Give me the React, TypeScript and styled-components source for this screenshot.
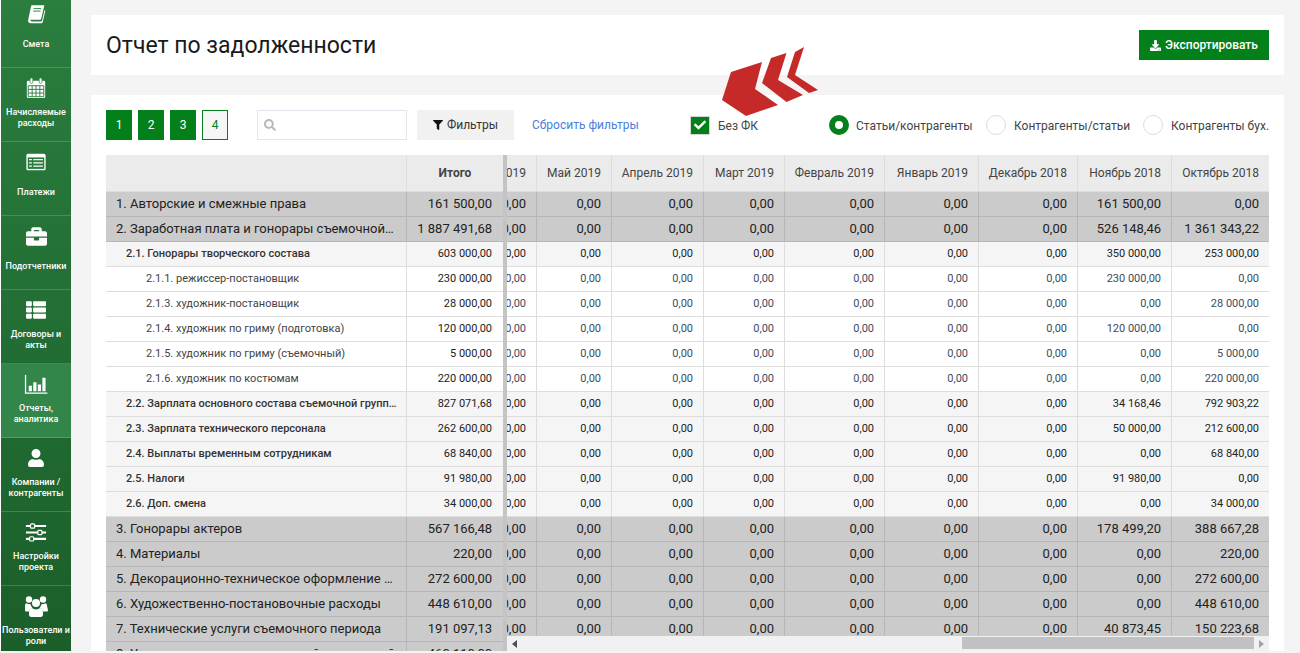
import React from "react";
import styled, { createGlobalStyle } from "styled-components";
import { FaBriefcase, FaCheck, FaDownload, FaFilter, FaSearch, FaThList, FaUser } from "react-icons/fa";

const GREEN = "#04801b";

const GlobalStyle = createGlobalStyle`
  html, body {
    margin: 0;
    padding: 0;
    height: 100%;
    overflow: hidden;
    background: #f4f4f4;
    font-family: Roboto, "Liberation Sans", sans-serif;
    color: #333;
  }
  * { box-sizing: border-box; }
`;

const BookIcon = () => (
  <svg width="20" height="20" viewBox="0 0 24 24">
    <path d="M7.5 1.5h14.5l-3.6 15.6c-.3 1.2-1 1.9-2.2 1.9H6.4c-.9 0-1.2 .6-.9 1.2.3 .6 .9 .9 1.7 .9h10.4c.8 0 1.5-.5 1.7-1.3l3-12.6.9 .8-3 13.2c-.3 1.1-1.3 1.9-2.5 1.9H5.6c-2 0-3.5-1.8-3-3.8L6 3c.2-.9 .8-1.5 1.5-1.5z" fill="#fff" />
    <path d="M9.2 5.5h9M8.5 8.5h9" stroke="#287c3c" strokeWidth="1.1" />
  </svg>
);

const CalendarIcon = () => (
  <svg width="22" height="22" viewBox="0 0 24 24">
    <rect x="2" y="4" width="20" height="19" rx="1.5" fill="#fff" />
    <path d="M3.5 9.5h17v12h-17zM3.5 13.5h17M3.5 17.5h17M7.8 9.5v12M12 9.5v12M16.2 9.5v12" stroke="#287c3c" strokeWidth="1" fill="none" />
    <rect x="5.5" y="1" width="3" height="6" rx="1.4" fill="#fff" stroke="#287c3c" strokeWidth=".7" />
    <rect x="15.5" y="1" width="3" height="6" rx="1.4" fill="#fff" stroke="#287c3c" strokeWidth=".7" />
  </svg>
);

const ListAltIcon = () => (
  <svg width="22" height="22" viewBox="0 0 24 24">
    <rect x="1.5" y="3" width="21" height="18" rx="2" fill="#fff" />
    <rect x="3" y="7" width="18" height="12.5" fill="#287c3c" />
    <path d="M4.5 9.5h3M9 9.5h10.5M4.5 13h3M9 13h10.5M4.5 16.5h3M9 16.5h10.5" stroke="#fff" strokeWidth="1.4" />
  </svg>
);

const ChartIcon = () => (
  <svg width="24" height="20" viewBox="0 0 26 22">
    <path d="M1.5 1v20h24" stroke="#fff" strokeWidth="1.4" fill="none" />
    <path d="M5 13h3.5v6H5zM10 9h3.5v10H10zM15 11.5h3.5V19H15zM20 4h3.5v15H20z" fill="#fff" />
  </svg>
);

const SlidersIcon = () => (
  <svg width="22" height="22" viewBox="0 0 24 24" fill="none">
    <path d="M1 5.5h22M1 12.5h22M1 19.5h22" stroke="#fff" strokeWidth="2.2" />
    <rect x="6" y="3.2" width="4.5" height="4.6" rx="1" fill="#1f6a30" stroke="#fff" strokeWidth="1.3" />
    <rect x="14" y="10.2" width="4.5" height="4.6" rx="1" fill="#1f6a30" stroke="#fff" strokeWidth="1.3" />
    <rect x="5" y="17.2" width="4.5" height="4.6" rx="1" fill="#1f6a30" stroke="#fff" strokeWidth="1.3" />
  </svg>
);

const UsersIcon = () => (
  <svg width="24" height="24" viewBox="0 0 24 24" fill="#fff">
    <circle cx="5" cy="5.5" r="3.2" />
    <circle cx="19" cy="5.5" r="3.2" />
    <circle cx="12" cy="9" r="4" />
    <path d="M1 11.5c0-1.4 .8-2.2 2-2.2 1 .8 2.2 1.1 3.4 .8.3 1.5 1 2.8 2 3.6-1.8 .8-3 2-3.6 3.8H2.4C1.5 17.5 1 17 1 16.2zM23 11.5c0-1.4-.8-2.2-2-2.2-1 .8-2.2 1.1-3.4 .8-.3 1.5-1 2.8-2 3.6 1.8 .8 3 2 3.6 3.8h3.4c.9 0 1.4-.5 1.4-1.3z" />
    <path d="M8 14c1.1 .9 2.5 1.4 4 1.4s2.9-.5 4-1.4c1.9 .3 3 1.8 3 4.2v2.6c0 1.2-.9 2.2-2.2 2.2H7.2C5.9 23 5 22 5 20.8v-2.6c0-2.4 1.1-3.9 3-4.2z" />
  </svg>
);

const menu = [
  { label: "Смета", icon: <BookIcon /> },
  { label: "Начисляемые расходы", icon: <CalendarIcon /> },
  { label: "Платежи", icon: <ListAltIcon /> },
  { label: "Подотчетники", icon: <FaBriefcase size={21} /> },
  { label: "Договоры и акты", icon: <FaThList size={20} /> },
  { label: "Отчеты, аналитика", icon: <ChartIcon />, active: true },
  { label: "Компании / контрагенты", icon: <FaUser size={18} /> },
  { label: "Настройки проекта", icon: <SlidersIcon /> },
  { label: "Пользователи и роли", icon: <UsersIcon /> },
];

const months = ["Июнь 2019", "Май 2019", "Апрель 2019", "Март 2019", "Февраль 2019", "Январь 2019", "Декабрь 2018", "Ноябрь 2018", "Октябрь 2018"];
const widths = [30, 75, 92, 81, 100, 94, 99, 94, 97];

type Row = { name: string; level: 0 | 1 | 2; total: string; nov: string; oct: string };

const rows: Row[] = [
  { name: "1. Авторские и смежные права", level: 0, total: "161 500,00", nov: "161 500,00", oct: "0,00" },
  { name: "2. Заработная плата и гонорары съемочной группы", level: 0, total: "1 887 491,68", nov: "526 148,46", oct: "1 361 343,22" },
  { name: "2.1. Гонорары творческого состава", level: 1, total: "603 000,00", nov: "350 000,00", oct: "253 000,00" },
  { name: "2.1.1. режиссер-постановщик", level: 2, total: "230 000,00", nov: "230 000,00", oct: "0,00" },
  { name: "2.1.3. художник-постановщик", level: 2, total: "28 000,00", nov: "0,00", oct: "28 000,00" },
  { name: "2.1.4. художник по гриму (подготовка)", level: 2, total: "120 000,00", nov: "120 000,00", oct: "0,00" },
  { name: "2.1.5. художник по гриму (съемочный)", level: 2, total: "5 000,00", nov: "0,00", oct: "5 000,00" },
  { name: "2.1.6. художник по костюмам", level: 2, total: "220 000,00", nov: "0,00", oct: "220 000,00" },
  { name: "2.2. Зарплата основного состава съемочной группы", level: 1, total: "827 071,68", nov: "34 168,46", oct: "792 903,22" },
  { name: "2.3. Зарплата технического персонала", level: 1, total: "262 600,00", nov: "50 000,00", oct: "212 600,00" },
  { name: "2.4. Выплаты временным сотрудникам", level: 1, total: "68 840,00", nov: "0,00", oct: "68 840,00" },
  { name: "2.5. Налоги", level: 1, total: "91 980,00", nov: "91 980,00", oct: "0,00" },
  { name: "2.6. Доп. смена", level: 1, total: "34 000,00", nov: "0,00", oct: "34 000,00" },
  { name: "3. Гонорары актеров", level: 0, total: "567 166,48", nov: "178 499,20", oct: "388 667,28" },
  { name: "4. Материалы", level: 0, total: "220,00", nov: "0,00", oct: "220,00" },
  { name: "5. Декорационно-техническое оформление съемок", level: 0, total: "272 600,00", nov: "0,00", oct: "272 600,00" },
  { name: "6. Художественно-постановочные расходы", level: 0, total: "448 610,00", nov: "0,00", oct: "448 610,00" },
  { name: "7. Технические услуги съемочного периода", level: 0, total: "191 097,13", nov: "40 873,45", oct: "150 223,68" },
  { name: "8. Услуги сторонних организаций и компаний", level: 0, total: "460 110,00", nov: "0,00", oct: "460 110,00" },
];

export default function App() {
  return (
    <>
      <GlobalStyle />
      <Page>
        <Sidebar>
          {menu.map((item) => (
            <MenuItem key={item.label} $active={item.active}>
              <MenuIcon>{item.icon}</MenuIcon>
              <MenuLabel>{item.label}</MenuLabel>
            </MenuItem>
          ))}
        </Sidebar>
        <Main>
          <HeaderCard>
            <Title>Отчет по задолженности</Title>
            <ExportButton>
              <FaDownload size={11} />
              Экспортировать
            </ExportButton>
          </HeaderCard>
          <ReportCard>
            <Toolbar>
              <Pager>
                {["1", "2", "3", "4"].map((n) => (
                  <PageButton key={n} $current={n === "4"}>{n}</PageButton>
                ))}
              </Pager>
              <SearchBox>
                <FaSearch size={12} color="#b8b8b8" />
              </SearchBox>
              <FilterButton>
                <FaFilter size={10} color="#111" />
                Фильтры
              </FilterButton>
              <ResetLink>Сбросить фильтры</ResetLink>
              <CheckLabel>
                <CheckBox><FaCheck size={12} color="#fff" /></CheckBox>
                <OptionText>Без ФК</OptionText>
              </CheckLabel>
              <RadioLabel $width={157}><Radio $checked /><OptionText>Статьи/контрагенты</OptionText></RadioLabel>
              <RadioLabel $width={157}><Radio /><OptionText>Контрагенты/статьи</OptionText></RadioLabel>
              <RadioLabel $width={126}><Radio /><OptionText>Контрагенты бух.</OptionText></RadioLabel>
            </Toolbar>
            <Table>
              <Frozen>
                <HeadRow>
                  <HeadCell $width={301} />
                  <HeadCell $width={96} $bold>Итого</HeadCell>
                </HeadRow>
                {rows.map((r) => (
                  <DataRow key={r.name} $level={r.level}>
                    <NameCell $level={r.level}><NameText>{r.name}</NameText></NameCell>
                    <ValueCell $level={r.level} $width={96} $strong>{r.total}</ValueCell>
                  </DataRow>
                ))}
              </Frozen>
              <Scroller>
                <ScrollBody>
                  <HeadRow>
                    {months.map((m, i) => (
                      <HeadCell key={m} $width={widths[i]}>{m}</HeadCell>
                    ))}
                  </HeadRow>
                  {rows.slice(0, 18).map((r) => (
                    <DataRow key={r.name} $level={r.level}>
                      {months.map((m, i) => (
                        <ValueCell key={m} $level={r.level} $width={widths[i]}>
                          {i === 7 ? r.nov : i === 8 ? r.oct : "0,00"}
                        </ValueCell>
                      ))}
                    </DataRow>
                  ))}
                </ScrollBody>
                <ScrollBar>
                  <ScrollArrow $dir="left" />
                  <ScrollTrack><ScrollThumb /></ScrollTrack>
                  <ScrollArrow $dir="right" />
                </ScrollBar>
              </Scroller>
            </Table>
          </ReportCard>
        </Main>
        <Pointer width="97" height="70" viewBox="0 0 97 70">
          <polygon points="9,25 40,15 33,42 56,58 24,69 0,53" fill="#c62a28" />
          <polygon points="49,11 64.5,6 56,33 81,48 64.5,55 40,36" fill="#c62a28" />
          <polygon points="73,5 82,0 73,28 96,43 87,46 65,30" fill="#c62a28" />
        </Pointer>
      </Page>
    </>
  );
}

const Page = styled.div`
  position: relative;
  display: flex;
  width: 1300px;
  height: 651px;
  overflow: hidden;
`;

const Sidebar = styled.nav`
  flex: 0 0 71px;
  border-left: 1px solid #fff;
  height: 651px;
  overflow: hidden;
  background: linear-gradient(#2a7e3e, #1b5e2a);
`;

const MenuItem = styled.a<{ $active?: boolean }>`
  display: flex;
  flex-direction: column;
  align-items: center;
  height: 74px;
  border-bottom: 1px solid rgba(255, 255, 255, 0.18);
  color: #fff;
  background: ${(p) => (p.$active ? "#33864a" : "transparent")};
  &:first-child {
    margin-top: -6px;
  }
`;

const MenuIcon = styled.div`
  height: 38px;
  flex: none;
  padding-top: 2px;
  display: flex;
  align-items: center;
  justify-content: center;
  color: #fff;
`;

const MenuLabel = styled.div`
  height: 24px;
  width: 70px;
  display: flex;
  align-items: center;
  justify-content: center;
  text-align: center;
  font-size: 9px;
  line-height: 11px;
  font-weight: 500;
`;

const Main = styled.main`
  flex: 1;
  min-width: 0;
  padding: 15px 16px 0 20px;
`;

const HeaderCard = styled.header`
  display: flex;
  align-items: center;
  justify-content: space-between;
  height: 60px;
  padding: 0 15px;
  background: #fff;
`;

const Title = styled.h1`
  margin: 0;
  font-size: 23px;
  font-weight: 400;
  color: #1a1a1a;
`;

const ExportButton = styled.button`
  display: flex;
  align-items: center;
  justify-content: center;
  gap: 4px;
  width: 130px;
  height: 30px;
  padding: 0;
  border: 0;
  background: ${GREEN};
  color: #fff;
  font: 500 12px Roboto, sans-serif;
`;

const ReportCard = styled.section`
  margin-top: 20px;
  height: 556px;
  padding: 15px 15px 0;
  background: #fff;
  overflow: hidden;
`;

const Toolbar = styled.div`
  display: flex;
  align-items: center;
  height: 30px;
  margin-bottom: 15px;
  font-size: 12px;
  white-space: nowrap;
`;

const Pager = styled.div`
  display: flex;
  gap: 6px;
  width: 151px;
`;

const PageButton = styled.button<{ $current?: boolean }>`
  width: 26px;
  height: 30px;
  padding: 0;
  border: 1px solid ${GREEN};
  background: ${(p) => (p.$current ? "#f6f6f6" : GREEN)};
  color: ${(p) => (p.$current ? GREEN : "#fff")};
  font: 400 12px Roboto, sans-serif;
`;

const SearchBox = styled.div`
  display: flex;
  align-items: center;
  width: 150px;
  height: 30px;
  padding-left: 6px;
  border: 1px solid #e3e6ee;
`;

const FilterButton = styled.button`
  display: flex;
  align-items: center;
  justify-content: center;
  gap: 4px;
  width: 97px;
  height: 30px;
  margin-left: 10px;
  border: 0;
  background: #f1f1f1;
  color: #333;
  font: 400 12px Roboto, sans-serif;
`;

const ResetLink = styled.a`
  width: 158px;
  margin-left: 18px;
  color: #4a7ee0;
`;

const CheckLabel = styled.label`
  display: flex;
  align-items: center;
  gap: 8px;
  width: 139px;
  color: #444;
`;

const CheckBox = styled.span`
  display: flex;
  align-items: center;
  justify-content: center;
  width: 20px;
  height: 19px;
  background: ${GREEN};
  border: 1px solid #d5d5d5;
`;

const OptionText = styled.span`
  margin-top: 2px;
`;

const RadioLabel = styled.label<{ $width: number }>`
  display: flex;
  align-items: center;
  gap: 7px;
  width: ${(p) => p.$width}px;
  color: #444;
`;

const Radio = styled.span<{ $checked?: boolean }>`
  flex: none;
  width: 20px;
  height: 20px;
  margin-right: ${(p) => (p.$checked ? 0 : 1)}px;
  border-radius: 50%;
  border: ${(p) => (p.$checked ? `6px solid ${GREEN}` : "1px solid #ddd")};
  background: #fff;
`;

const Table = styled.div`
  display: flex;
  height: 496px;
  overflow: hidden;
`;

const Frozen = styled.div`
  flex: none;
  width: 401px;
  border-right: 4px solid #c4c4c4;
`;

const Scroller = styled.div`
  flex: 1;
  min-width: 0;
  display: flex;
  flex-direction: column;
`;

const ScrollBody = styled.div`
  height: 481px;
  flex: none;
  overflow: hidden;
`;

const HeadRow = styled.div`
  display: flex;
  height: 37px;
  background: #ebebeb;
  border-bottom: 1px solid #ddd;
`;

const HeadCell = styled.div<{ $width: number; $bold?: boolean }>`
  flex: none;
  display: flex;
  align-items: center;
  justify-content: ${(p) => (p.$bold ? "center" : "flex-end")};
  width: ${(p) => p.$width}px;
  padding: 0 10px;
  overflow: hidden;
  white-space: nowrap;
  font-size: 12px;
  font-weight: ${(p) => (p.$bold ? 700 : 400)};
  color: #444;
  border-right: 1px solid #ddd;
  &:last-child {
    border-right: 0;
  }
`;

const DataRow = styled.div<{ $level: number }>`
  display: flex;
  height: 25px;
  background: ${(p) => (p.$level === 0 ? "#cbcbcb" : p.$level === 1 ? "#f5f5f5" : "#fff")};
  border-bottom: 1px solid ${(p) => (p.$level === 0 ? "#b6b6b6" : "#ddd")};
`;

const NameCell = styled.div<{ $level: number }>`
  flex: none;
  display: flex;
  align-items: center;
  width: 301px;
  padding: 0 ${(p) => (p.$level === 0 ? 10 : 9)}px 2px ${(p) => (p.$level === 0 ? 10 : p.$level === 1 ? 20 : 40)}px;
  font-size: ${(p) => (p.$level === 0 ? 13 : 11)}px;
  font-weight: ${(p) => (p.$level === 1 ? 500 : 400)};
  color: ${(p) => (p.$level === 2 ? "#444" : p.$level === 0 ? "#222" : "#333")};
  border-right: 1px solid ${(p) => (p.$level === 0 ? "#b6b6b6" : "#ddd")};
`;

const NameText = styled.span`
  overflow: hidden;
  white-space: nowrap;
  text-overflow: ellipsis;
`;

const ValueCell = styled.div<{ $level: number; $width: number; $strong?: boolean }>`
  flex: none;
  display: flex;
  align-items: center;
  justify-content: flex-end;
  width: ${(p) => p.$width}px;
  padding: 0 ${(p) => (p.$strong ? 11 : 10)}px 2px 0;
  overflow: hidden;
  white-space: nowrap;
  font-size: ${(p) => (p.$level === 0 ? 13 : 11)}px;
  color: ${(p) => (p.$level === 2 && !p.$strong ? "#3b4c5e" : "#222")};
  border-right: 1px solid ${(p) => (p.$level === 0 ? "#b6b6b6" : "#ddd")};
  &:last-child {
    border-right: 0;
  }
`;

const ScrollBar = styled.div`
  display: flex;
  height: 15px;
  background: #f1f1f1;
`;

const ScrollTrack = styled.div`
  flex: 1;
  display: flex;
  justify-content: flex-end;
  padding-top: 1px;
`;

const ScrollThumb = styled.div`
  width: 292px;
  height: 12px;
  background: #c1c1c1;
`;

const ScrollArrow = styled.div<{ $dir: "left" | "right" }>`
  flex: none;
  width: 15px;
  display: flex;
  align-items: center;
  justify-content: center;
  &::before {
    content: "";
    border: 4px solid transparent;
    border-left-width: ${(p) => (p.$dir === "right" ? "5px" : "0")};
    border-right-width: ${(p) => (p.$dir === "left" ? "5px" : "0")};
    border-left-color: ${(p) => (p.$dir === "right" ? "#a3a3a3" : "transparent")};
    border-right-color: ${(p) => (p.$dir === "left" ? "#505050" : "transparent")};
  }
`;

const Pointer = styled.svg`
  position: absolute;
  left: 722px;
  top: 47px;
`;
